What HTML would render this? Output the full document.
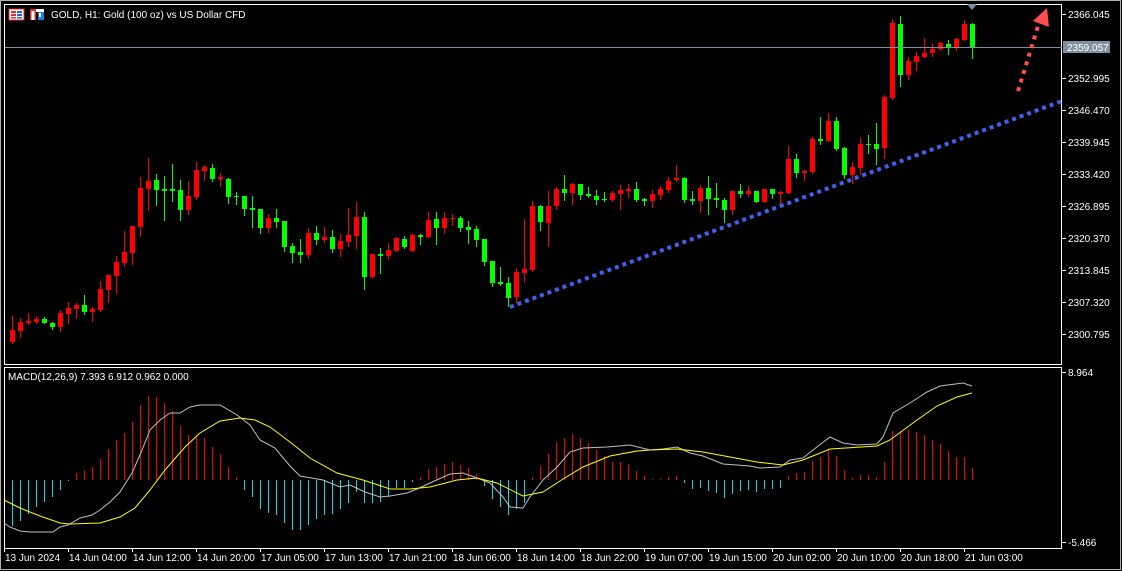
<!DOCTYPE html>
<html><head><meta charset="utf-8"><style>
html,body{margin:0;padding:0;background:#000;width:1122px;height:571px;overflow:hidden}
svg{display:block}
text{font-family:"Liberation Sans",Arial,sans-serif;font-size:10px;fill:#fff}
</style></head><body>
<svg id="s" width="1122" height="571" xmlns="http://www.w3.org/2000/svg">
<rect x="0" y="0" width="1122" height="571" fill="#000"/>
<rect x="0.5" y="0.5" width="1120" height="569" fill="none" stroke="#b0b0b0"/>
<rect x="4.5" y="4.5" width="1057" height="360" fill="none" stroke="#fff"/>
<rect x="4.5" y="367.5" width="1057" height="181" fill="none" stroke="#fff"/>
<g id="c"></g>
<line x1="5" y1="47.5" x2="1062" y2="47.5" stroke="#8090a0"/>
<polygon points="967,4 977,4 972,10" fill="#8090a0"/>
<line x1="510" y1="307" x2="1062" y2="101" stroke="#4060ee" stroke-width="4" stroke-dasharray="4 4"/>
<line x1="1018" y1="91" x2="1038" y2="26" stroke="#ff4c4c" stroke-width="4" stroke-dasharray="4 5"/>
<polygon points="1047,8 1033,21 1049,27" fill="#ff4c4c"/>
<g id="ax"></g>
<rect x="1063" y="41" width="47" height="12" fill="#8090a0"/>
<text x="1067" y="51">2359.057</text>
<g transform="translate(9,9)">
<rect x="0" y="0" width="15" height="11" fill="#fff" stroke="#e03030"/>
<rect x="2" y="2" width="5" height="2" fill="#e03030"/><rect x="2" y="5" width="5" height="2" fill="#e03030"/><rect x="2" y="8" width="5" height="1.5" fill="#e03030"/>
<rect x="8" y="2" width="5" height="2" fill="#2060e0"/><rect x="8" y="5" width="5" height="2" fill="#2060e0"/><rect x="8" y="8" width="5" height="1.5" fill="#2060e0"/>
</g>
<g transform="translate(30,9)">
<rect x="0" y="0" width="6" height="11" fill="#e03030"/><rect x="1.5" y="2" width="3" height="9" fill="#fff"/>
<rect x="8" y="3" width="6" height="8" fill="#2080e0"/><rect x="6" y="0" width="8" height="3" fill="#fff"/><rect x="9" y="4" width="2" height="4" fill="#fff"/>
</g>
<text x="51" y="18">GOLD, H1:  Gold (100 oz) vs US Dollar CFD</text>
<text x="8" y="380">MACD(12,26,9) 7.393 6.912 0.962 0.000</text>
</svg>
<script>
var C=[[316,330,342,343,1],[318,322,331,337,1],[313,321,323,324,1],[316,319,322,323,1],[317,319,323,323,0],[322,323,327,329,0],[310,313,327,331,1],[302,308,314,323,1],[303,305,309,318,1],[295,305,312,314,0],[307,309,312,321,1],[281,289,310,311,1],[275,275,290,302,1],[256,262,276,293,1],[231,252,263,266,1],[226,226,253,264,1],[177,188,227,236,1],[158,181,189,210,1],[174,180,190,205,0],[176,189,191,220,0],[164,189,191,201,0],[180,190,210,220,0],[181,196,210,214,1],[162,170,197,199,1],[165,167,171,180,1],[164,168,179,181,0],[173,177,179,186,1],[178,179,197,203,0],[192,196,197,204,0],[196,196,209,215,0],[196,208,210,227,0],[209,209,228,233,0],[214,218,228,232,1],[209,218,222,227,0],[221,221,247,251,0],[243,246,253,262,0],[239,252,255,262,0],[228,233,255,258,1],[226,233,240,244,0],[227,237,240,242,1],[230,237,249,252,0],[234,241,249,256,1],[208,235,242,246,1],[202,217,236,248,1],[212,217,277,289,0],[254,254,277,277,1],[248,254,256,273,0],[243,250,256,259,1],[237,238,251,251,1],[236,239,247,248,0],[234,235,251,251,1],[234,235,237,244,0],[212,220,237,237,1],[212,219,228,244,0],[212,218,228,233,1],[214,218,219,225,1],[216,218,228,231,0],[221,227,230,243,0],[226,229,240,246,0],[239,239,262,265,0],[261,261,283,286,0],[267,282,284,285,0],[277,283,298,306,0],[268,272,297,302,1],[219,269,273,282,1],[201,206,270,271,1],[205,206,222,230,0],[191,206,223,246,1],[187,189,206,209,1],[175,189,193,200,0],[183,184,193,204,1],[184,184,195,199,0],[187,194,196,197,0],[190,196,200,204,0],[192,199,200,201,0],[191,193,200,201,1],[185,190,194,209,1],[184,189,191,197,1],[182,189,200,201,0],[198,199,201,205,0],[190,194,201,207,1],[186,189,195,199,1],[177,181,190,192,1],[165,178,180,181,1],[177,178,200,202,0],[191,199,201,204,0],[185,188,201,212,1],[176,188,199,214,0],[183,198,200,207,0],[198,200,210,222,0],[191,191,210,214,1],[184,191,194,197,0],[186,191,194,196,1],[191,191,202,202,0],[189,189,202,202,1],[189,189,194,198,0],[191,192,194,203,1],[146,159,193,193,1],[154,159,173,177,0],[170,171,173,180,1],[137,139,172,173,1],[117,139,141,144,0],[113,121,141,141,1],[117,121,149,150,0],[147,148,175,178,0],[162,167,175,183,1],[138,144,168,174,1],[135,144,145,153,0],[123,144,149,164,0],[95,97,148,158,1],[19,23,98,99,1],[16,24,75,86,0],[57,61,75,79,1],[52,56,62,70,1],[38,53,57,57,1],[44,49,53,56,1],[42,43,49,50,1],[40,44,47,54,0],[38,39,47,50,1],[20,24,40,40,1],[23,24,47,58,0]];
var H=[-46,-41,-34,-27,-22,-17,-10,-1,7,10,13,21,31,40,47,58,75,84,83,77,69,54,45,45,42,33,26,13,3,-10,-17,-29,-33,-35,-43,-50,-50,-45,-39,-35,-34,-29,-23,-12,-23,-23,-22,-17,-8,-8,-2,3,11,13,16,18,15,12,6,-6,-19,-27,-35,-29,-23,3,14,26,38,42,46,42,37,30,24,18,18,16,9,4,1,1,3,4,-3,-9,-8,-11,-13,-18,-14,-11,-10,-12,-9,-9,-8,4,7,8,19,23,31,24,10,2,5,5,3,18,49,49,50,48,45,40,36,29,23,23,12];
var s='';
for(var i=0;i<C.length;i++){var c=C[i],x=12.5+8*i,col=c[4]?'#ff0000':'#00ff00';
s+='<line x1="'+x+'" y1="'+c[0]+'" x2="'+x+'" y2="'+(c[3]+1)+'" stroke="'+col+'"/>';
var h=Math.max(1,c[2]-c[1]);s+='<rect x="'+(x-2.5)+'" y="'+c[1]+'" width="5" height="'+h+'" fill="'+col+'"/>';}
for(var i=0;i<H.length;i++){var x=12.5+8*i,v=H[i];
s+='<line x1="'+x+'" y1="480" x2="'+x+'" y2="'+(480-v)+'" stroke="'+(v>=0?'#ff0000':'#00e0f0')+'"/>';}
var SL="4,523 10,527 20,531 30,532 53,532 60,527 68,525 80,518 92,515 100,510 110,502 120,492 132,473 140,455 150,430 160,420 170,413 180,413 190,407 200,405 220,405 237,415 250,425 260,440 275,448 290,466 300,476 323,480 340,487 350,485 365,492 380,497 390,496 407,493 417,489 430,483 450,474 463,473 477,478 490,483 503,497 510,507 523,508 530,497 543,480 557,467 570,452 583,448 607,447 630,445 650,450 663,449 677,447 690,453 703,456 723,464 750,466 760,468 780,467 790,460 803,458 813,450 830,437 843,443 857,445 877,444 883,437 893,413 910,403 927,392 940,386 963,383 972,386";
var YL="4,500 20,508 40,516 60,523 70,524 100,523 120,517 135,508 150,490 165,470 185,447 200,433 220,421 240,418 255,420 270,427 290,442 310,458 337,473 363,480 390,489 410,489 430,487 457,480 477,478 497,483 523,496 543,492 563,479 583,467 610,456 637,451 650,450 677,449 703,452 730,457 757,462 783,465 803,460 830,449 877,446 890,440 917,420 937,406 957,397 972,393";
s+='<polyline points="'+SL+'" fill="none" stroke="#c0c0c0"/>';
s+='<polyline points="'+YL+'" fill="none" stroke="#ffff00"/>';
document.getElementById('c').innerHTML=s;
var a='';var P=['2366.045','2359.057','2352.995','2346.470','2339.945','2333.420','2326.895','2320.370','2313.845','2307.320','2300.795'];
var Y=[14,0,78,110,142,174,206,238,270,302,334];
for(var i=0;i<P.length;i++){if(!Y[i])continue;a+='<line x1="1062" y1="'+(Y[i]+.5)+'" x2="1066" y2="'+(Y[i]+.5)+'" stroke="#fff"/><text x="1068" y="'+(Y[i]+4)+'">'+P[i]+'</text>';}
a+='<line x1="1062" y1="372.5" x2="1066" y2="372.5" stroke="#fff"/><text x="1068" y="376">8.964</text>';
a+='<line x1="1062" y1="542.5" x2="1066" y2="542.5" stroke="#fff"/><text x="1068" y="546">-5.466</text>';
var T=['13 Jun 2024','14 Jun 04:00','14 Jun 12:00','14 Jun 20:00','17 Jun 05:00','17 Jun 13:00','17 Jun 21:00','18 Jun 06:00','18 Jun 14:00','18 Jun 22:00','19 Jun 07:00','19 Jun 15:00','20 Jun 02:00','20 Jun 10:00','20 Jun 18:00','21 Jun 03:00'];
for(var i=0;i<T.length;i++){var x=4+64*i;a+='<line x1="'+(x+.5)+'" y1="548" x2="'+(x+.5)+'" y2="552" stroke="#fff"/><text x="'+(x+1)+'" y="561">'+T[i]+'</text>';}
document.getElementById('ax').innerHTML=a;
</script>
</body></html>
